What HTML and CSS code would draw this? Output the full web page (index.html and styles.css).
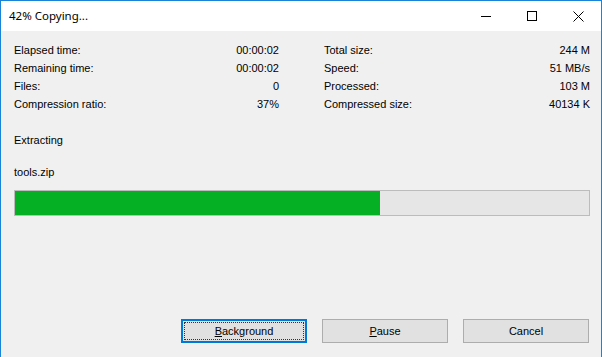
FILE: index.html
```html
<!DOCTYPE html>
<html lang="en">

<head>
  <meta charset="UTF-8">
  <title>42% Copying...</title>
  <link rel="stylesheet" href="styles.css">
</head>

<body>
  <div class="window">
    <div class="titlebar">
      <span class="title">42% Copying...</span>
      <div class="controls">
        <span class="ctl">
          <svg width="10" height="10" viewBox="0 0 10 10"><path d="M0 5.5h10" stroke="#000" stroke-width="1"/></svg>
        </span>
        <span class="ctl">
          <svg width="10" height="10" viewBox="0 0 10 10"><rect x="0.5" y="0.5" width="9" height="9" fill="none" stroke="#000" stroke-width="1"/></svg>
        </span>
        <span class="ctl">
          <svg width="11" height="11" viewBox="0 0 11 11"><path d="M0.5 0.5l10 10M10.5 0.5l-10 10" stroke="#000" stroke-width="1"/></svg>
        </span>
      </div>
    </div>

    <div class="content">
      <div class="stats">
        <div class="col">
          <div class="row"><span>Elapsed time:</span><span>00:00:02</span></div>
          <div class="row"><span>Remaining time:</span><span>00:00:02</span></div>
          <div class="row"><span>Files:</span><span>0</span></div>
          <div class="row"><span>Compression ratio:</span><span>37%</span></div>
        </div>
        <div class="col">
          <div class="row"><span>Total size:</span><span>244 M</span></div>
          <div class="row"><span>Speed:</span><span>51 MB/s</span></div>
          <div class="row"><span>Processed:</span><span>103 M</span></div>
          <div class="row"><span>Compressed size:</span><span>40134 K</span></div>
        </div>
      </div>

      <div class="status">Extracting</div>
      <div class="file">tools.zip</div>

      <div class="progress">
        <div class="bar" style="width: 63.6%"></div>
      </div>

      <div class="buttons">
        <button class="focused"><u>B</u>ackground</button>
        <button><u>P</u>ause</button>
        <button>Cancel</button>
      </div>
    </div>
  </div>
</body>

</html>
```

FILE: styles.css
```css
html,
body {
  margin: 0;
  padding: 0;
  height: 100%;
}

body {
  font-family: "Liberation Sans", Arial, sans-serif;
  font-size: 11px;
  color: #000;
  background: #f0f0f0;
}

.window {
  height: 100%;
  box-sizing: border-box;
  border: 1px solid #1883d7;
  border-bottom: none;
  background: #f0f0f0;
  display: flex;
  flex-direction: column;
}

.titlebar {
  height: 30px;
  background: white;
  display: flex;
  align-items: center;
  justify-content: space-between;
}

.title {
  font-family: "Noto Sans", sans-serif;
  font-size: 11.5px;
  padding-left: 8px;
  margin-top: -1px;
}

.controls {
  display: flex;
  height: 100%;
}

.ctl {
  width: 46px;
  display: flex;
  align-items: center;
  justify-content: center;
}

.content {
  flex: 1;
  padding: 10px 11px 0 13px;
  display: flex;
  flex-direction: column;
}

.stats {
  display: grid;
  grid-template-columns: 265px 266px;
  column-gap: 45px;
}

.row {
  display: flex;
  justify-content: space-between;
  line-height: 18px;
  height: 18px;
}

.status {
  line-height: 18px;
  margin-top: 18px;
}

.file {
  line-height: 18px;
  margin-top: 14px;
}

.progress {
  margin-top: 9px;
  height: 26px;
  box-sizing: border-box;
  border: 1px solid #bcbcbc;
  background: #e6e6e6;
}

.bar {
  height: 100%;
  background: #06b025;
}

.buttons {
  display: flex;
  justify-content: flex-end;
  gap: 15px;
  margin-top: 103px;
  margin-right: 1px;
}

button {
  width: 126px;
  height: 24px;
  box-sizing: border-box;
  border: 1px solid #adadad;
  background: #e1e1e1;
  font-family: "Liberation Sans", Arial, sans-serif;
  font-size: 11px;
  color: #000;
  padding: 0;
}

button.focused {
  border: 2px solid #0078d7;
  outline: 1px dotted #333;
  outline-offset: -4px;
}
```
